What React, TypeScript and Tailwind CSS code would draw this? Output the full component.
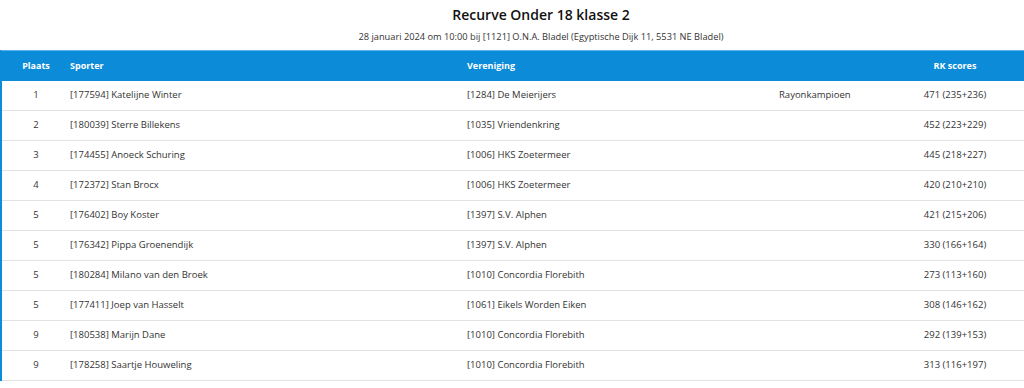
import React from "react";

const rows = [
  ["1", "[177594] Katelijne Winter", "[1284] De Meierijers", "Rayonkampioen", "471 (235+236)"],
  ["2", "[180039] Sterre Billekens", "[1035] Vriendenkring", "", "452 (223+229)"],
  ["3", "[174455] Anoeck Schuring", "[1006] HKS Zoetermeer", "", "445 (218+227)"],
  ["4", "[172372] Stan Brocx", "[1006] HKS Zoetermeer", "", "420 (210+210)"],
  ["5", "[176402] Boy Koster", "[1397] S.V. Alphen", "", "421 (215+206)"],
  ["5", "[176342] Pippa Groenendijk", "[1397] S.V. Alphen", "", "330 (166+164)"],
  ["5", "[180284] Milano van den Broek", "[1010] Concordia Florebith", "", "273 (113+160)"],
  ["5", "[177411] Joep van Hasselt", "[1061] Eikels Worden Eiken", "", "308 (146+162)"],
  ["9", "[180538] Marijn Dane", "[1010] Concordia Florebith", "", "292 (139+153)"],
  ["9", "[178258] Saartje Houweling", "[1010] Concordia Florebith", "", "313 (116+197)"],
];

const grid = "grid grid-cols-[68px_397px_312px_109px_134px_1fr]";

export default function App() {
  return (
    <div className="w-[1024px] h-[388px] overflow-hidden bg-white text-[#333] font-['Open_Sans',sans-serif]">
      <div className="w-[1082px]">
        <div className="h-[50px] flex flex-col items-center pt-[5px]">
          <div className="text-[14px] leading-[20px] font-semibold text-[#111]">Recurve Onder 18 klasse 2</div>
          <div className="text-[9.25px] leading-[14px] mt-[5px] text-[#333]">
            28 januari 2024 om 10:00 bij [1121] O.N.A. Bladel (Egyptische Dijk 11, 5531 NE Bladel)
          </div>
        </div>
        <div className="border-t border-[#5fb3ea] border-l-2 border-l-[#0b8bd8]">
          <div className={`${grid} h-[30px] items-center bg-[#0b8bd8] text-white text-[9px] font-bold`}>
            <div className="text-center">Plaats</div>
            <div>Sporter</div>
            <div>Vereniging</div>
            <div></div>
            <div className="text-center">RK scores</div>
            <div></div>
          </div>
          {rows.map((r, i) => (
            <div key={i} className={`${grid} h-[30px] items-center border-b border-[#e2e2e2] text-[9.5px]`}>
              <div className="text-center">{r[0]}</div>
              <div>{r[1]}</div>
              <div>{r[2]}</div>
              <div>{r[3]}</div>
              <div className="text-center">{r[4]}</div>
              <div></div>
            </div>
          ))}
        </div>
      </div>
    </div>
  );
}
